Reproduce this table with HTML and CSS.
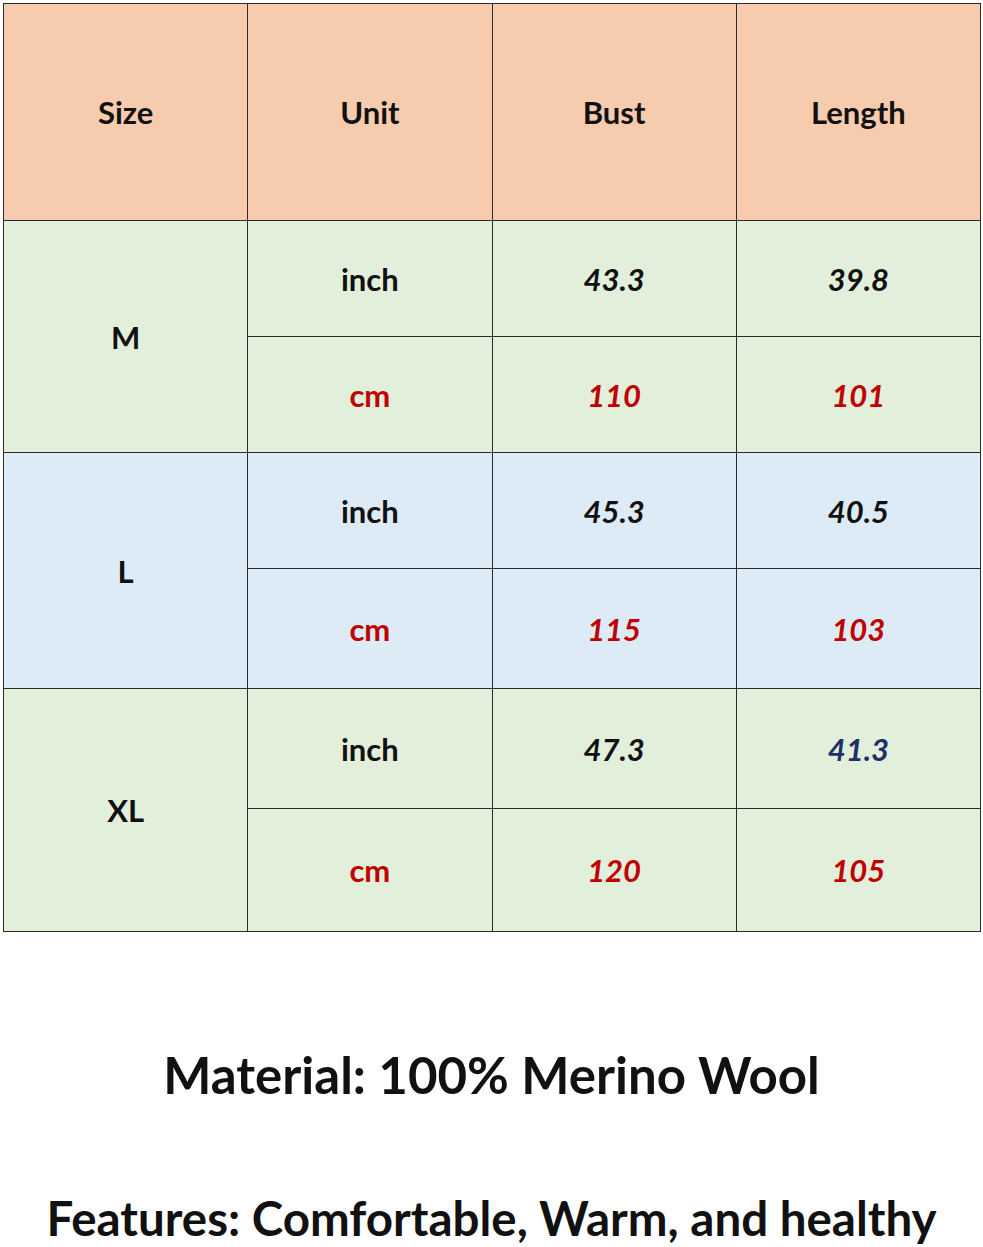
FILE: index.html
```html
<!DOCTYPE html>
<html>
<head>
<meta charset="utf-8">
<link rel="stylesheet" href="styles.css">
</head>
<body>
<div class="page">
  <table class="chart">
    <colgroup><col class="c"><col class="c"><col class="c"><col class="c"></colgroup>
    <tr class="head">
      <th>Size</th><th>Unit</th><th>Bust</th><th>Length</th>
    </tr>
    <tr class="green r1">
      <td rowspan="2" class="size">M</td><td class="unit">inch</td><td class="num">43.3</td><td class="num">39.8</td>
    </tr>
    <tr class="green r2">
      <td class="unit red">cm</td><td class="num red">110</td><td class="num red">101</td>
    </tr>
    <tr class="blue r3">
      <td rowspan="2" class="size">L</td><td class="unit">inch</td><td class="num">45.3</td><td class="num">40.5</td>
    </tr>
    <tr class="blue r4">
      <td class="unit red">cm</td><td class="num red">115</td><td class="num red">103</td>
    </tr>
    <tr class="green r5">
      <td rowspan="2" class="size">XL</td><td class="unit">inch</td><td class="num">47.3</td><td class="num navy">41.3</td>
    </tr>
    <tr class="green r6">
      <td class="unit red">cm</td><td class="num red">120</td><td class="num red">105</td>
    </tr>
  </table>
  <p class="material">Material: 100% Merino Wool</p>
  <p class="features">Features: Comfortable, Warm, and healthy</p>
</div>
</body>
</html>
```
FILE: styles.css
```css
html, body {
  margin: 0;
  padding: 0;
  background: #ffffff;
}
.page {
  padding: 3px 3px 0 3px;
  font-family: "Lato", "Open Sans", sans-serif;
  color: #111;
}
.chart {
  width: 977px;
  border-collapse: collapse;
  table-layout: fixed;
}
.chart .c { width: 244.25px; }
.chart th, .chart td {
  border: 1px solid #2b2b2b;
  text-align: center;
  vertical-align: middle;
  padding: 0;
  font-size: 31px;
  font-weight: 700;
}
.head th {
  background: #f7cbad;
  height: 216px;
}
.green td { background: #e2efda; }
.blue td { background: #ddebf7; }
.r1 td, .r2 td, .r3 td { height: 115px; }
.r4 td { height: 119px; }
.r5 td { height: 119px; }
.r6 td { height: 122px; }
.num { font-style: italic; }
.red { color: #c00000; }
.navy { color: #1f3068; }
.material {
  margin: 113px 0 0 0;
  text-align: center;
  font-size: 51px;
  font-weight: 700;
  line-height: 60px;
}
.features {
  margin: 83px 0 0 0;
  text-align: center;
  font-size: 47.5px;
  font-weight: 700;
  line-height: 60px;
}
```
